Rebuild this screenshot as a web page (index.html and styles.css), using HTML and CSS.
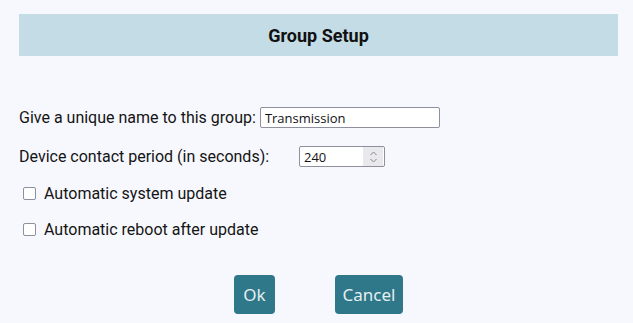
FILE: index.html
```html
<!DOCTYPE html>
<html>
<head>
<meta charset="utf-8">
<link rel="stylesheet" href="styles.css">
</head>
<body>
<div class="page">
  <div class="header">Group Setup</div>
  <div class="form">
    <div class="row row-name">
      <label class="label">Give a unique name to this group:</label>
      <input class="text-input name-input" type="text" value="Transmission">
    </div>
    <div class="row row-period">
      <label class="label label-fixed">Device contact period (in seconds):</label>
      <div class="num-input">
        <span class="num-value">240</span>
        <span class="spinner">
          <svg width="9" height="14" viewBox="0 0 9 14"><path d="M1.5 5 L4.5 2 L7.5 5" fill="none" stroke="#888" stroke-width="1"/><path d="M1.5 9 L4.5 12 L7.5 9" fill="none" stroke="#888" stroke-width="1"/></svg>
        </span>
      </div>
    </div>
    <div class="check-row"><span class="box"></span><span class="check-label">Automatic system update</span></div>
    <div class="check-row"><span class="box"></span><span class="check-label">Automatic reboot after update</span></div>
  </div>
  <div class="buttons">
    <button class="btn btn-ok">Ok</button>
    <button class="btn btn-cancel">Cancel</button>
  </div>
</div>
</body>
</html>
```
FILE: styles.css
```css
html, body {
  margin: 0;
  padding: 0;
  background: #f7f8fe;
}
.page {
  padding: 14px 15px 0 19px;
  font-family: Roboto, "Liberation Sans", sans-serif;
  color: #141414;
}
.header {
  background: #c4dce6;
  height: 42px;
  display: flex;
  align-items: center;
  justify-content: center;
  font-weight: bold;
  font-size: 18px;
  color: #111;
}
.form {
  margin-top: 51px;
}
.row {
  display: flex;
  align-items: center;
  font-size: 16px;
}
.row-period {
  margin-top: 18px;
}
.label-fixed {
  width: 280px;
}
.name-input {
  margin-left: 4px;
}
.text-input {
  box-sizing: border-box;
  width: 180px;
  height: 21px;
  border: 1px solid #8f8f9d;
  border-radius: 2px;
  background: #fff;
  font-family: "Open Sans", "Noto Sans", sans-serif;
  font-size: 13px;
  padding: 0 4px;
  color: #111;
}
.num-input {
  box-sizing: border-box;
  width: 86px;
  height: 21px;
  border: 1px solid #8f8f9d;
  border-radius: 2px;
  background: #fff;
  display: flex;
  align-items: center;
  justify-content: space-between;
  font-family: "Open Sans", "Noto Sans", sans-serif;
  font-size: 13px;
  padding-left: 4px;
}
.spinner {
  width: 20px;
  height: 19px;
  background: #e9e9ed;
  display: flex;
  align-items: center;
  justify-content: center;
  margin-right: 1px;
}
.check-row {
  display: flex;
  align-items: center;
  margin-top: 17px;
  margin-left: 4px;
  font-size: 16px;
}
.check-row + .check-row {
  margin-top: 17px;
}
.box {
  box-sizing: border-box;
  width: 13px;
  height: 13px;
  border: 1px solid #8f8f9d;
  border-radius: 2px;
  background: #fff;
  margin-right: 8px;
}
.buttons {
  display: flex;
  justify-content: center;
  gap: 60px;
  margin-top: 36px;
}
.btn {
  background: #2e7889;
  color: #e6eef0;
  border: none;
  border-radius: 4px;
  height: 39px;
  padding: 0;
  font-family: "Noto Sans", "Open Sans", sans-serif;
  font-size: 17px;
}
.btn-ok {
  width: 41px;
}
.btn-cancel {
  width: 68px;
}
```
